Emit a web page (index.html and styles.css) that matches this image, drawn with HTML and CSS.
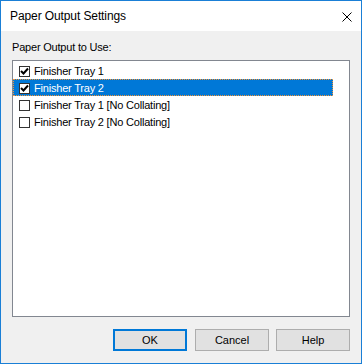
FILE: index.html
```html
<!DOCTYPE html>
<html lang="en">
<head>
    <meta charset="UTF-8">
    <title>Paper Output Settings</title>
    <link rel="stylesheet" href="styles.css">
</head>
<body>

    <div class="window">
        <!-- Title Bar -->
        <div class="titlebar">
            <span class="title">Paper Output Settings</span>
            <svg class="close" width="10" height="10" viewBox="0 0 10 10">
                <path d="M0.5 0.5 L9.5 9.5 M9.5 0.5 L0.5 9.5" stroke="#000" stroke-width="1" fill="none"/>
            </svg>
        </div>

        <div class="content">
            <div class="label">Paper Output to Use:</div>

            <!-- Output List -->
            <div class="listbox">
                <div class="item">
                    <span class="check">
                        <svg width="9" height="9" viewBox="0 0 9 9"><path d="M1 4 L3.5 6.5 L8 1.5" stroke="#000" stroke-width="2" fill="none"/></svg>
                    </span>
                    <span>Finisher Tray 1</span>
                </div>
                <div class="item selected">
                    <span class="check">
                        <svg width="9" height="9" viewBox="0 0 9 9"><path d="M1 4 L3.5 6.5 L8 1.5" stroke="#000" stroke-width="2" fill="none"/></svg>
                    </span>
                    <span>Finisher Tray 2</span>
                </div>
                <div class="item">
                    <span class="check"></span>
                    <span>Finisher Tray 1 [No Collating]</span>
                </div>
                <div class="item">
                    <span class="check"></span>
                    <span>Finisher Tray 2 [No Collating]</span>
                </div>
            </div>

            <!-- Buttons -->
            <div class="buttons">
                <button class="btn default">OK</button>
                <button class="btn">Cancel</button>
                <button class="btn">Help</button>
            </div>
        </div>
    </div>

</body>
</html>
```

FILE: styles.css
```css
/* General Styles */
body {
    margin: 0;
    font-family: "Liberation Sans", Arial, sans-serif;
    background: #f0f0f0;
}

/* Window frame */
.window {
    width: 362px;
    height: 364px;
    box-sizing: border-box;
    border: 1px solid #1a7fd6;
    display: flex;
    flex-direction: column;
}

/* Title Bar */
.titlebar {
    height: 30px;
    background: #fff;
    display: flex;
    align-items: center;
    justify-content: space-between;
    padding: 0 9px 0 9px;
}

.title {
    font-size: 12px;
    letter-spacing: -0.1px;
    color: #000;
}

.close {
    display: block;
    margin-top: 1px;
}

/* Dialog body */
.content {
    flex: 1;
    background: #f0f0f0;
    padding: 10px 11px 0 11px;
}

.label {
    font-size: 11px;
    line-height: 13px;
    letter-spacing: -0.2px;
    color: #000;
    margin-bottom: 6px;
}

/* List box */
.listbox {
    height: 257px;
    box-sizing: border-box;
    border: 1px solid #828790;
    background: #fff;
    padding-top: 1px;
}

.item {
    width: 320px;
    height: 17px;
    display: flex;
    align-items: center;
    font-size: 11px;
    letter-spacing: -0.2px;
    color: #000;
    box-sizing: border-box;
}

.item.selected {
    background: #0078d7;
    color: #fff;
    outline: 1px dotted #f29436;
    outline-offset: -1px;
}

.check {
    width: 11px;
    height: 11px;
    box-sizing: border-box;
    border: 1px solid #333;
    background: #fff;
    margin: 1px 4px 0 6px;
    display: flex;
    align-items: center;
    justify-content: center;
}

.check svg {
    display: block;
}

/* Buttons */
.buttons {
    display: flex;
    justify-content: flex-end;
    gap: 7px;
    margin-top: 12px;
}

.btn {
    width: 74px;
    height: 22px;
    box-sizing: border-box;
    font-family: "Liberation Sans", Arial, sans-serif;
    font-size: 11px;
    color: #000;
    background: #e1e1e1;
    border: 1px solid #adadad;
    padding: 0;
}

.btn.default {
    border: 2px solid #0078d7;
    margin-right: 1px;
}
```
